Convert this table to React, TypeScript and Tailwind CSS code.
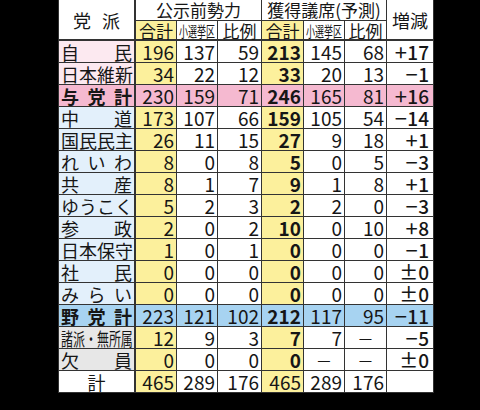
type Row = {
  name: string[];
  kind: "pinkLight" | "pink" | "blueLight" | "blue" | "gray" | "white";
  nameStyle?: "spread" | "center" | "condensed";
  bold?: boolean;
  v: string[];
  diff: string;
};

const rows: Row[] = [
  { name: ["自", "民"], kind: "pinkLight", v: ["196", "137", "59", "213", "145", "68"], diff: "+17" },
  { name: ["日", "本", "維", "新"], kind: "pinkLight", v: ["34", "22", "12", "33", "20", "13"], diff: "-1" },
  { name: ["与", "党", "計"], kind: "pink", bold: true, v: ["230", "159", "71", "246", "165", "81"], diff: "+16" },
  { name: ["中", "道"], kind: "blueLight", v: ["173", "107", "66", "159", "105", "54"], diff: "-14" },
  { name: ["国", "民", "民", "主"], kind: "blueLight", v: ["26", "11", "15", "27", "9", "18"], diff: "+1" },
  { name: ["れ", "い", "わ"], kind: "blueLight", v: ["8", "0", "8", "5", "0", "5"], diff: "-3" },
  { name: ["共", "産"], kind: "blueLight", v: ["8", "1", "7", "9", "1", "8"], diff: "+1" },
  { name: ["ゆ", "う", "こ", "く"], kind: "blueLight", v: ["5", "2", "3", "2", "2", "0"], diff: "-3" },
  { name: ["参", "政"], kind: "blueLight", v: ["2", "0", "2", "10", "0", "10"], diff: "+8" },
  { name: ["日", "本", "保", "守"], kind: "blueLight", v: ["1", "0", "1", "0", "0", "0"], diff: "-1" },
  { name: ["社", "民"], kind: "blueLight", v: ["0", "0", "0", "0", "0", "0"], diff: "±0" },
  { name: ["み", "ら", "い"], kind: "blueLight", v: ["0", "0", "0", "0", "0", "0"], diff: "±0" },
  { name: ["野", "党", "計"], kind: "blue", bold: true, v: ["223", "121", "102", "212", "117", "95"], diff: "-11" },
  { name: ["諸派・無所属"], kind: "gray", nameStyle: "condensed", v: ["12", "9", "3", "7", "7", "—"], diff: "-5" },
  { name: ["欠", "員"], kind: "gray", v: ["0", "0", "0", "0", "—", "—"], diff: "±0" },
  { name: ["計"], kind: "white", nameStyle: "center", v: ["465", "289", "176", "465", "289", "176"], diff: "" },
];

const nameBg: Record<Row["kind"], string> = {
  pinkLight: "bg-[#fce9f0]",
  pink: "bg-[#f5b9d0]",
  blueLight: "bg-[#e3f0fb]",
  blue: "bg-[#a7d3f1]",
  gray: "bg-[#e7e7e7]",
  white: "bg-white",
};

const yellow = "bg-[#fcf09c]";

// wide sign glyphs like the print table
function Diff({ text }: { text: string }) {
  if (!text) return null;
  const sign = text[0];
  const rest = text.slice(1);
  if (sign === "+" || sign === "-") {
    return (
      <span className="flex items-center">
        <span className="inline-block w-[13px] text-center text-[22px] font-normal leading-none -translate-y-[1px]">
          {sign === "+" ? "+" : "−"}
        </span>
        <span>{rest}</span>
      </span>
    );
  }
  return <span>{text}</span>;
}

function NameCell({ row }: { row: Row }) {
  const base = `${nameBg[row.kind]} border-r border-[#333] flex items-center text-[18px] leading-none px-[2px]`;
  if (row.nameStyle === "condensed") {
    return (
      <div className={`${base} justify-start overflow-visible`}>
        <span className="inline-block whitespace-nowrap scale-x-[0.665] origin-left">{row.name[0]}</span>
      </div>
    );
  }
  if (row.nameStyle === "center") {
    return <div className={`${base} justify-center`}>{row.name[0]}</div>;
  }
  return (
    <div className={`${base} justify-between ${row.bold ? "font-bold" : ""}`}>
      {row.name.map((c, i) => (
        <span key={i}>{c}</span>
      ))}
    </div>
  );
}

function DataRow({ row }: { row: Row }) {
  const rowBg = row.kind === "pink" ? nameBg.pink : row.kind === "blue" ? nameBg.blue : null;
  return (
    <>
      <NameCell row={row} />
      {row.v.map((val, i) => {
        const isTotal = i === 0 || i === 3;
        const bg = rowBg ?? (isTotal ? yellow : "bg-white");
        const bold = i === 3 && row.kind !== "white";
        const dash = val === "—";
        return (
          <div
            key={i}
            className={`${bg} flex items-center ${dash ? "justify-center text-[15px]" : "justify-end pr-[2px] text-[19px]"} leading-none ${bold ? "font-bold" : ""}`}
          >
            {val}
          </div>
        );
      })}
      <div className={`${rowBg ?? "bg-white"} flex items-center justify-end pr-[4px] text-[19px] leading-none font-medium`}>
        <Diff text={row.diff} />
      </div>
    </>
  );
}

export default function App() {
  return (
    <div className="w-[480px] h-[410px] bg-black overflow-hidden font-['Noto_Sans_CJK_JP',sans-serif] text-[#161616]">
      <div className="ml-[58px] -mt-[2px] w-[376px] bg-[#333] px-px pb-px grid gap-px grid-cols-[76px_40px_40px_43px_41px_40px_41px_46px] grid-rows-[22px_19px_repeat(16,21px)]">
        {/* header */}
        <div className="row-span-2 bg-white border-r border-b border-[#333] flex items-center justify-center gap-[11px] text-[18px] leading-none pt-[2px]">
          <span>党</span>
          <span>派</span>
        </div>
        <div className="col-span-3 bg-white flex items-end justify-center text-[17px] leading-none pb-[2px]">公示前勢力</div>
        <div className="col-span-3 bg-white flex items-end justify-center text-[17px] leading-none pb-[2px]">獲得議席(予測)</div>
        <div className="row-span-2 bg-white border-b border-[#333] flex items-center justify-center text-[18px] leading-none pt-[2px]">
          増減
        </div>

        <div className={`${yellow} border-b border-[#333] flex items-center justify-center text-[17px] leading-none`}>合計</div>
        <div className="bg-white border-b border-[#333] flex items-center justify-center text-[15px] leading-none overflow-visible">
          <span className="inline-block whitespace-nowrap scale-x-[0.6]">小選挙区</span>
        </div>
        <div className="bg-white border-b border-[#333] flex items-center justify-center text-[17px] leading-none">比例</div>
        <div className={`${yellow} border-b border-[#333] flex items-center justify-center text-[17px] leading-none`}>合計</div>
        <div className="bg-white border-b border-[#333] flex items-center justify-center text-[15px] leading-none overflow-visible">
          <span className="inline-block whitespace-nowrap scale-x-[0.6]">小選挙区</span>
        </div>
        <div className="bg-white border-b border-[#333] flex items-center justify-center text-[17px] leading-none">比例</div>

        {rows.map((r, i) => (
          <DataRow key={i} row={r} />
        ))}
      </div>
    </div>
  );
}
